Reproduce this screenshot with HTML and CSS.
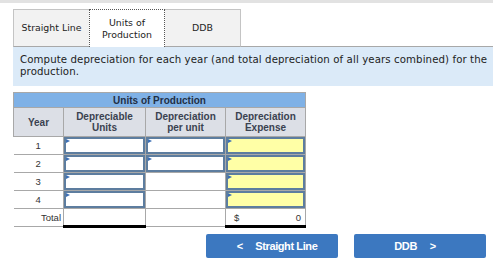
FILE: index.html
```html
<!DOCTYPE html>
<html lang="en">
<head>
    <meta charset="UTF-8">
    <title>Units of Production</title>
    <link rel="stylesheet" href="styles.css">
</head>
<body>
    <div class="topbar"></div>
    <div class="tabs">
        <div class="tab">Straight Line</div>
        <div class="tab active">Units of<br>Production</div>
        <div class="tab">DDB</div>
        <div class="tab-rest"></div>
    </div>
    <div class="prompt">Compute depreciation for each year (and total depreciation of all years combined) for the production.</div>

    <table class="grid">
        <tr>
            <th class="title" colspan="4">Units of Production</th>
        </tr>
        <tr class="heads">
            <th class="c-year">Year</th>
            <th class="c-units">Depreciable<br>Units</th>
            <th class="c-rate">Depreciation<br>per unit</th>
            <th class="c-exp">Depreciation<br>Expense</th>
        </tr>
        <tr>
            <td class="year">1</td>
            <td class="in"><div class="box"></div></td>
            <td class="in"><div class="box"></div></td>
            <td class="in"><div class="box yellow"></div></td>
        </tr>
        <tr>
            <td class="year">2</td>
            <td class="in"><div class="box"></div></td>
            <td class="in"><div class="box"></div></td>
            <td class="in"><div class="box yellow"></div></td>
        </tr>
        <tr>
            <td class="year">3</td>
            <td class="in"><div class="box"></div></td>
            <td></td>
            <td class="in"><div class="box yellow"></div></td>
        </tr>
        <tr>
            <td class="year">4</td>
            <td class="in"><div class="box"></div></td>
            <td></td>
            <td class="in"><div class="box yellow"></div></td>
        </tr>
        <tr class="total">
            <td class="year">Total</td>
            <td class="sum"></td>
            <td></td>
            <td class="sum"><span>$</span><span>0</span></td>
        </tr>
    </table>

    <div class="nav">
        <button class="navbtn"><span class="arrow">&lt;</span> Straight Line</button>
        <button class="navbtn">DDB <span class="arrow">&gt;</span></button>
    </div>
</body>
</html>
```

FILE: styles.css
```css
html { box-sizing: border-box; }
*, *:before, *:after { box-sizing: inherit; }
body {
    margin: 0;
    width: 493px;
    background: #fff;
    font-family: "DejaVu Sans", Verdana, sans-serif;
    color: #222;
}
.topbar {
    height: 3px;
    background: #e2e2e2;
    margin-bottom: 6px;
}
.tabs {
    display: flex;
    margin-left: 13px;
    height: 38px;
}
.tab {
    width: 76px;
    background: #f2f2f2;
    border: 1px solid #c4c4c4;
    border-right: none;
    font-size: 9.4px;
    line-height: 12px;
    display: flex;
    align-items: center;
    justify-content: center;
    text-align: center;
    color: #222;
}
.tab.active {
    background: #fff;
    border: 1px dotted #555;
    border-bottom: none;
}
.tab + .tab.active + .tab { border-left: none; }
.tab:nth-child(3) { border-right: 1px solid #c4c4c4; }
.tab-rest {
    flex: 1;
    border-bottom: 1px solid #a8a8a8;
}
.tab:not(.active) { border-bottom: 1px solid #a8a8a8; }
.prompt {
    margin-left: 13px;
    background: #dbeaf8;
    padding: 7px 1px 6px 7px;
    font-size: 10.2px;
    letter-spacing: 0.1px;
    line-height: 12px;
    color: #222;
    height: 39px;
}
.grid {
    margin: 6px 0 0 13px;
    border-collapse: collapse;
    font-family: "Liberation Sans", Arial, sans-serif;
    font-size: 9.5px;
    color: #333;
}
.grid th, .grid td {
    padding: 0;
    border: 1px solid #a8a8a8;
}
.title {
    background: #7fb1e6;
    height: 15px;
    font-size: 10px;
    font-weight: bold;
    color: #1f2f45;
    border-color: #7fb1e6;
}
.heads th {
    background: #dcdfe6;
    height: 29px;
    line-height: 11px;
    font-size: 10px;
    font-weight: bold;
    color: #3a4250;
}
.c-year { width: 50px; }
.c-units { width: 82px; }
.c-rate { width: 80px; }
.c-exp { width: 80px; }
.grid td {
    height: 18px;
    border-left: none;
    border-right: none;
}
.grid td.year {
    text-align: center;
    border-left: none;
    border-right: 1px solid #a8a8a8;
    color: #333;
}
.grid td + td { border-left: 1px solid #a8a8a8; }
.grid td:last-child { border-right: 1px solid #a8a8a8; }
.total td.year {
    text-align: right;
    padding-right: 2px;
}
.in { position: relative; }
.box {
    height: 17px;
    border: 2px solid #5d7d9f;
    background: #fff;
    position: relative;
}
.box.yellow { background: #ffffa6; }
.box:before {
    content: "";
    position: absolute;
    left: 0;
    top: 0;
    border-left: 4px solid #3d6fb5;
    border-top: 2.5px solid transparent;
    border-bottom: 2.5px solid transparent;
}
.total td.sum {
    border-bottom: 3px solid #000;
}
.total td.sum span:first-child { padding-left: 8px; }
.total td.sum {
    text-align: left;
}
.total td.sum span + span {
    float: right;
    padding-right: 4px;
}
.nav {
    display: flex;
    justify-content: flex-end;
    gap: 16px;
    margin: 6px 7px 0 0;
}
.navbtn {
    width: 132px;
    height: 24px;
    border: none;
    border-radius: 2px;
    background: #3c78c0;
    color: #fff;
    font-family: "Liberation Sans", Arial, sans-serif;
    font-weight: bold;
    font-size: 11px;
    letter-spacing: -0.4px;
}
.arrow {
    margin: 0 10px;
}
```
